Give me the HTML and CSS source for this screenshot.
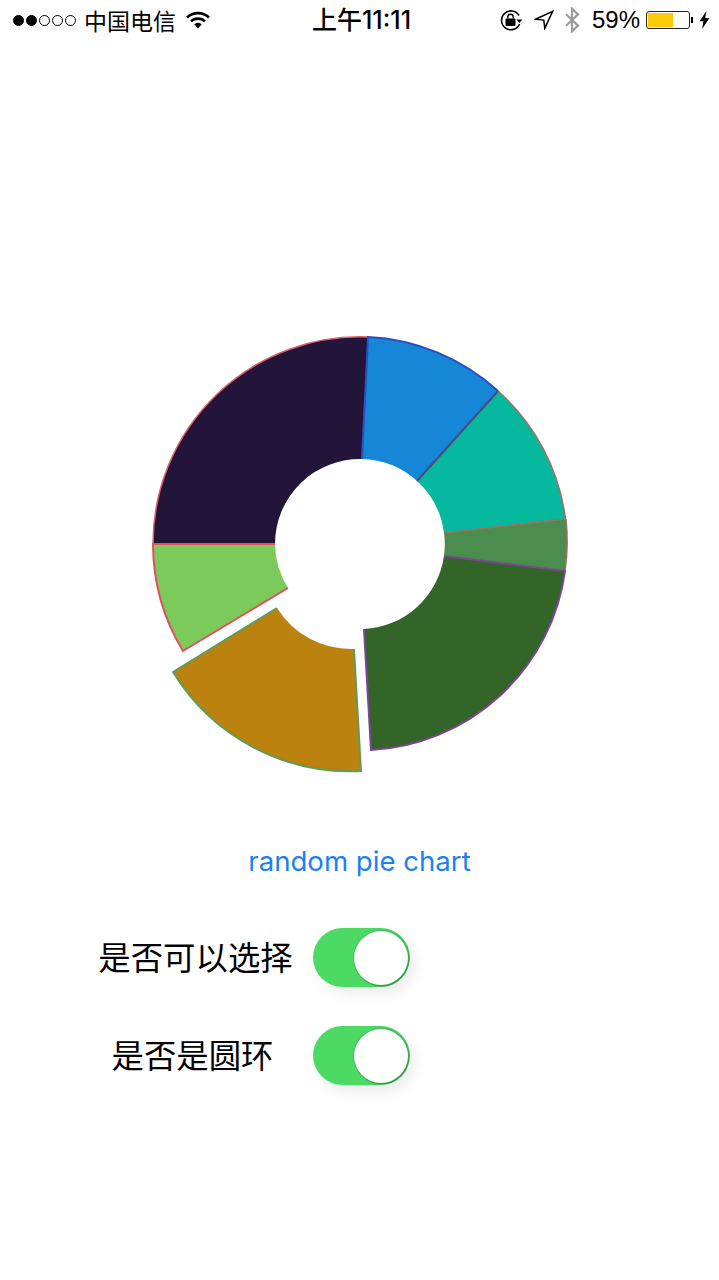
FILE: index.html
```html
<!DOCTYPE html>
<html lang="zh-CN">
<head>
<meta charset="UTF-8">
<meta name="viewport" content="width=device-width, initial-scale=1.0">
<title>random pie chart</title>
<link rel="stylesheet" href="styles.css">
</head>
<body>

<div class="statusbar">
    <div class="status-left">
        <div class="signal">
            <span class="dot full"></span><span class="dot full"></span><span class="dot"></span><span class="dot"></span><span class="dot"></span>
        </div>
        <span class="carrier">中国电信</span>
        <svg class="wifi" width="24" height="18" viewBox="0 0 24 18">
            <path d="M1 6.5a16 16 0 0 1 22 0" fill="none" stroke="#000" stroke-width="2.6"/>
            <path d="M5 10.4a10.2 10.2 0 0 1 14 0" fill="none" stroke="#000" stroke-width="2.6"/>
            <path d="M8.2 13.2a5.4 5.4 0 0 1 7.6 0L12 17.4z" fill="#000"/>
        </svg>
    </div>
    <div class="status-time">上午11:11</div>
    <div class="status-right">
        <svg class="rotlock" width="23" height="22" viewBox="0 0 23 22">
            <path d="M19 6.5A9.4 9.4 0 1 0 19.6 15" fill="none" stroke="#000" stroke-width="1.6"/>
            <path d="M16.4 10.5h6l-3 3.6z" fill="#000"/>
            <rect x="5.500" y="9.500" width="10" height="7.500" rx="1" fill="#000"/>
            <path d="M7.800 9.500V8a2.700 2.700 0 0 1 5.400 0v1.500" fill="none" stroke="#000" stroke-width="1.4"/>
        </svg>
        <svg class="locate" width="20" height="20" viewBox="0 0 20 20">
            <path d="M18.6 1.4 1.6 9.2l8.2.9 1 8.3z" fill="none" stroke="#000" stroke-width="1.5" stroke-linejoin="miter"/>
        </svg>
        <svg class="bluetooth" width="16" height="26" viewBox="0 0 16 26">
            <path d="M2 7.2 14 18.6 8 24.4V1.6l6 5.8L2 18.8" fill="none" stroke="#9b9b9b" stroke-width="2.2"/>
        </svg>
        <span class="percent">59%</span>
        <div class="battery"><div class="battery-level"></div></div>
        <div class="battery-nub"></div>
        <svg class="bolt" width="11" height="18" viewBox="0 0 11 18">
            <path d="M7.4 0 .6 10.2h3.8L3.2 18l7.2-11H6.2z" fill="#000"/>
        </svg>
    </div>
</div>

<div class="chart">
    <svg width="440" height="460" viewBox="140 325 440 460">
        <!-- fills first, the inner arcs have no outline -->
        <path fill="#231539" d="M153 544A207 207 0 0 1 368 337L362 459A85 85 0 0 0 275 544Z"/>
        <path fill="#1686d6" d="M368 337A207 207 0 0 1 498 391L417 481A85 85 0 0 0 362 459Z"/>
        <path fill="#06b89e" d="M498 391A207 207 0 0 1 565.500 519L444 533A85 85 0 0 0 417 481Z"/>
        <path fill="#4b8c4f" d="M566 519A207 207 0 0 1 565 571L444 556A85 85 0 0 0 444 533Z"/>
        <path fill="#326527" d="M565 571A207 207 0 0 1 371 750L364 629A85 85 0 0 0 444 556Z"/>
        <path fill="#bb8210" d="M361 771A208 208 0 0 1 173 672L277 608A87 87 0 0 0 354 649Z"/>
        <path fill="#7bca5a" d="M153 544A207 207 0 0 0 183 651L288 588A85 85 0 0 1 275 544Z"/>

        <path class="edge thin" stroke="#d9636a" d="M153 544A207 207 0 0 1 368 337"/>
        <path class="edge" stroke="#2a4fc4" d="M362 459L368 337A207 207 0 0 1 498 391"/>
        <path class="edge thin" stroke="#a0705e" d="M444 533L565.500 519M498 391A207 207 0 0 1 565.500 519"/>
        <path class="edge" stroke="#4b4a80" d="M498 391L417 481"/>
        <path class="edge thin" stroke="#a0705e" d="M566 519A207 207 0 0 1 565 571"/>
        <path class="edge" stroke="#7c4494" d="M444 556L565 571A207 207 0 0 1 371 750L364 629"/>
        <path class="edge" stroke="#5f9c59" d="M354 649L361 771A208 208 0 0 1 173 672L277 608"/>
        <path class="edge" stroke="#e0505f" d="M275 544H153A207 207 0 0 0 183 651L288 588"/>
    </svg>
</div>

<div class="action">random pie chart</div>

<div class="option">
    <span class="option-label">是否可以选择</span>
    <div class="switch"><div class="thumb"></div></div>
</div>
<div class="option second">
    <span class="option-label shifted">是否是圆环</span>
    <div class="switch"><div class="thumb"></div></div>
</div>

</body>
</html>
```

FILE: styles.css
```css
body {
    margin: 0;
    min-height: 1280px;
    background: #fff;
    color: #000;
    font-family: "Inter", "Noto Sans CJK SC", sans-serif;
}
.statusbar {
    height: 40px;
    display: flex;
    align-items: center;
    justify-content: space-between;
    padding: 0 9px 0 13px;
}
.status-left, .status-right {
    width: 230px;
    display: flex;
    align-items: center;
}
.status-right {
    justify-content: flex-end;
}
.signal {
    display: flex;
    gap: 2px;
}
.dot {
    width: 11px;
    height: 11px;
    box-sizing: border-box;
    border: 1px solid #000;
    border-radius: 50%;
}
.dot.full {
    background: #000;
}
.carrier {
    margin-left: 8px;
    font-family: "Noto Sans CJK SC", sans-serif;
    font-size: 23px;
    line-height: 30px;
}
.wifi {
    margin-left: 10px;
}
.status-time {
    font-family: "Inter", "Noto Sans CJK SC", sans-serif;
    font-size: 25px;
    font-weight: 500;
    line-height: 30px;
}
.rotlock {
    margin-right: 11px;
}
.locate {
    margin-right: 10px;
}
.bluetooth {
    margin-right: 12px;
}
.percent {
    font-family: "Liberation Sans", sans-serif;
    font-size: 24px;
    line-height: 30px;
}
.battery {
    width: 44px;
    height: 18px;
    margin-left: 6px;
    box-sizing: border-box;
    border: 1px solid #222;
    border-radius: 3px;
    padding: 1px;
}
.battery-level {
    width: 25px;
    height: 14px;
    background: #fecb0b;
}
.battery-nub {
    width: 2px;
    height: 6px;
    margin-left: 1px;
    background: #000;
}
.bolt {
    margin-left: 6px;
}
.chart {
    display: flex;
    padding: 285px 0 0 140px;
}
.chart svg {
    display: block;
}
.edge {
    fill: none;
    stroke-width: 2;
    stroke-linejoin: miter;
}
.edge.thin {
    stroke-width: 1.5;
}
.action {
    margin-top: 56px;
    text-align: center;
    font-size: 27.6px;
    line-height: 40px;
    color: #1a82f0;
}
.option {
    display: flex;
    align-items: center;
    margin-top: 47px;
    padding-left: 98px;
}
.option.second {
    margin-top: 39px;
}
.option-label {
    width: 195px;
    margin-top: -4px;
    text-align: center;
    font-family: "Noto Sans CJK SC", sans-serif;
    font-size: 32.4px;
    line-height: 44px;
}
.option-label.shifted {
    padding-right: 6px;
    box-sizing: border-box;
}
.switch {
    width: 97px;
    height: 59px;
    margin-left: 20px;
    box-sizing: border-box;
    display: flex;
    justify-content: flex-end;
    border-radius: 30px;
    background: linear-gradient(90deg, #4cd964 55%, #43c65b);
    padding: 3px 2px 0 0;
    box-shadow: 5px 7px 14px rgba(0, 0, 0, 0.08);
}
.thumb {
    width: 54px;
    height: 54px;
    border-radius: 50%;
    background: #fff;
    box-shadow: 0 0 0 1px rgba(60, 170, 80, 0.6), 1px 1.5px 1px rgba(40, 120, 60, 0.7);
}
```
